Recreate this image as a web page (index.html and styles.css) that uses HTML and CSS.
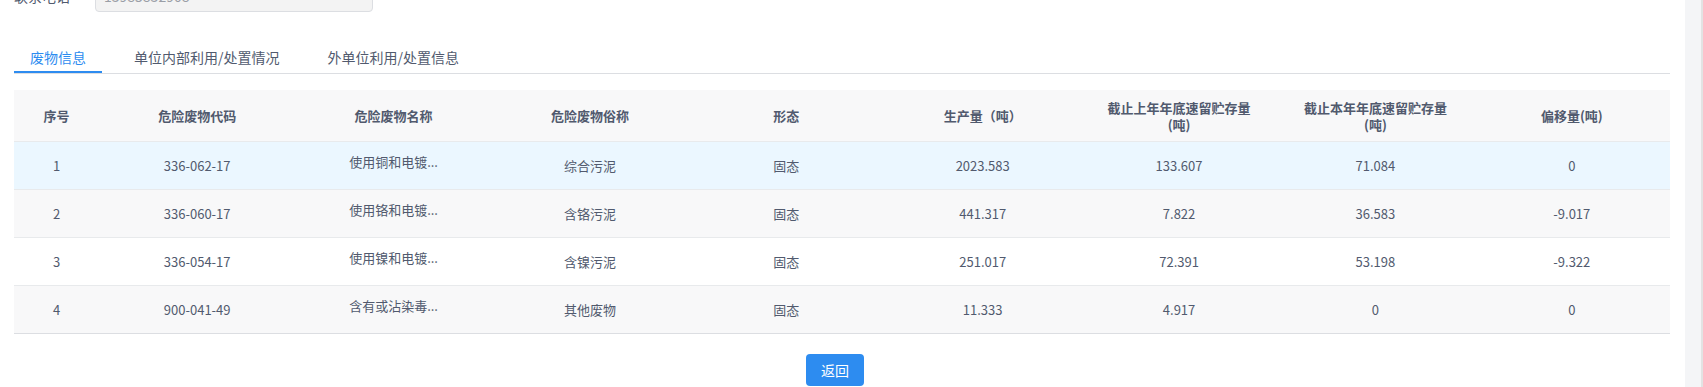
FILE: index.html
```html
<!DOCTYPE html>
<html lang="zh-CN">
<head>
<meta charset="utf-8">
<title>废物信息</title>
<link rel="stylesheet" href="styles.css">
</head>
<body>
<div class="main">
  <div class="content">
    <div class="form-row">
      <label class="form-label">联系电话</label>
      <div class="form-input">13985832908</div>
    </div>
    <div class="tabs">
      <div class="tab active">废物信息</div>
      <div class="tab">单位内部利用/处置情况</div>
      <div class="tab">外单位利用/处置信息</div>
    </div>
    <table class="grid">
      <colgroup>
        <col class="c-idx">
        <col><col><col><col><col><col><col><col>
      </colgroup>
      <thead>
        <tr>
          <th>序号</th>
          <th>危险废物代码</th>
          <th>危险废物名称</th>
          <th>危险废物俗称</th>
          <th>形态</th>
          <th>生产量（吨）</th>
          <th>截止上年年底速留贮存量<br>(吨)</th>
          <th>截止本年年底速留贮存量<br>(吨)</th>
          <th>偏移量(吨)</th>
        </tr>
      </thead>
      <tbody>
        <tr class="hl">
          <td>1</td><td>336-062-17</td><td><span class="ell">使用铜和电镀...</span></td><td>综合污泥</td><td>固态</td><td>2023.583</td><td>133.607</td><td>71.084</td><td>0</td>
        </tr>
        <tr class="stripe">
          <td>2</td><td>336-060-17</td><td><span class="ell">使用铬和电镀...</span></td><td>含铬污泥</td><td>固态</td><td>441.317</td><td>7.822</td><td>36.583</td><td>-9.017</td>
        </tr>
        <tr>
          <td>3</td><td>336-054-17</td><td><span class="ell">使用镍和电镀...</span></td><td>含镍污泥</td><td>固态</td><td>251.017</td><td>72.391</td><td>53.198</td><td>-9.322</td>
        </tr>
        <tr class="stripe">
          <td>4</td><td>900-041-49</td><td><span class="ell">含有或沾染毒...</span></td><td>其他废物</td><td>固态</td><td>11.333</td><td>4.917</td><td>0</td><td>0</td>
        </tr>
      </tbody>
    </table>
  </div>
  <div class="actions">
    <button class="btn-primary" type="button">返回</button>
  </div>
</div>
<div class="scrollbar"></div>
</body>
</html>
```

FILE: styles.css
```css
html, body {
  margin: 0;
  padding: 0;
  height: 100%;
  overflow: hidden;
  background: #ffffff;
}

body {
  display: flex;
  font-family: "Noto Sans CJK SC", "Noto Sans", sans-serif;
  color: #515a6e;
}

.main {
  flex: 1;
  min-width: 0;
  display: flex;
  flex-direction: column;
}

.content {
  padding: 0 15px 0 14px;
}

.form-row {
  display: flex;
  align-items: center;
  margin-top: -20px;
  height: 32px;
}

.form-label {
  width: 81px;
  font-size: 14px;
  color: #515a6e;
}

.form-input {
  box-sizing: border-box;
  width: 278px;
  height: 32px;
  line-height: 30px;
  padding: 0 8px;
  background: #f3f3f3;
  border: 1px solid #dcdee2;
  border-radius: 4px;
  font-size: 14px;
  color: #9a9ea6;
}

.tabs {
  display: flex;
  margin-top: 28px;
  border-bottom: 1px solid #dcdee2;
}

.tab {
  padding: 9px 16px 5px;
  margin-right: 16px;
  font-size: 14px;
  line-height: 17px;
  color: #515a6e;
  border-bottom: 2px solid transparent;
}

.tab.active {
  color: #2d8cf0;
  border-bottom-color: #2d8cf0;
}

.grid {
  margin-top: 16px;
  width: 100%;
  table-layout: fixed;
  border-collapse: collapse;
  font-size: 13px;
}

.c-idx {
  width: 85px;
}

.grid th {
  height: 51px;
  padding: 0 8px;
  background: #f8f8f9;
  border-bottom: 1px solid #e8eaec;
  font-weight: 700;
  line-height: 17px;
  color: #515a6e;
  text-align: center;
  vertical-align: middle;
}

.grid td {
  height: 47px;
  padding: 0 8px;
  border-bottom: 1px solid #e8eaec;
  text-align: center;
  vertical-align: middle;
  color: #515a6e;
  line-height: 18px;
}

.grid tbody tr:last-child td {
  border-bottom-color: #dcdee2;
}

.grid tr.hl td {
  background: #ebf7ff;
}

.grid tr.stripe td {
  background: #f8f8f9;
}

.ell {
  display: inline-block;
  padding-bottom: 8px;
  white-space: nowrap;
}

.actions {
  display: flex;
  justify-content: center;
  padding: 20px 15px 0 0;
}

.btn-primary {
  width: 58px;
  height: 32px;
  padding: 0;
  border: none;
  border-radius: 4px;
  background: #2d8cf0;
  color: #ffffff;
  font-family: "Noto Sans CJK SC", sans-serif;
  font-size: 14px;
}

.scrollbar {
  flex: none;
  width: 16px;
  height: 100%;
  background: #f4f5f7;
  border-left: 0;
  border-right: 2px solid #e3e3e3;
}
```
